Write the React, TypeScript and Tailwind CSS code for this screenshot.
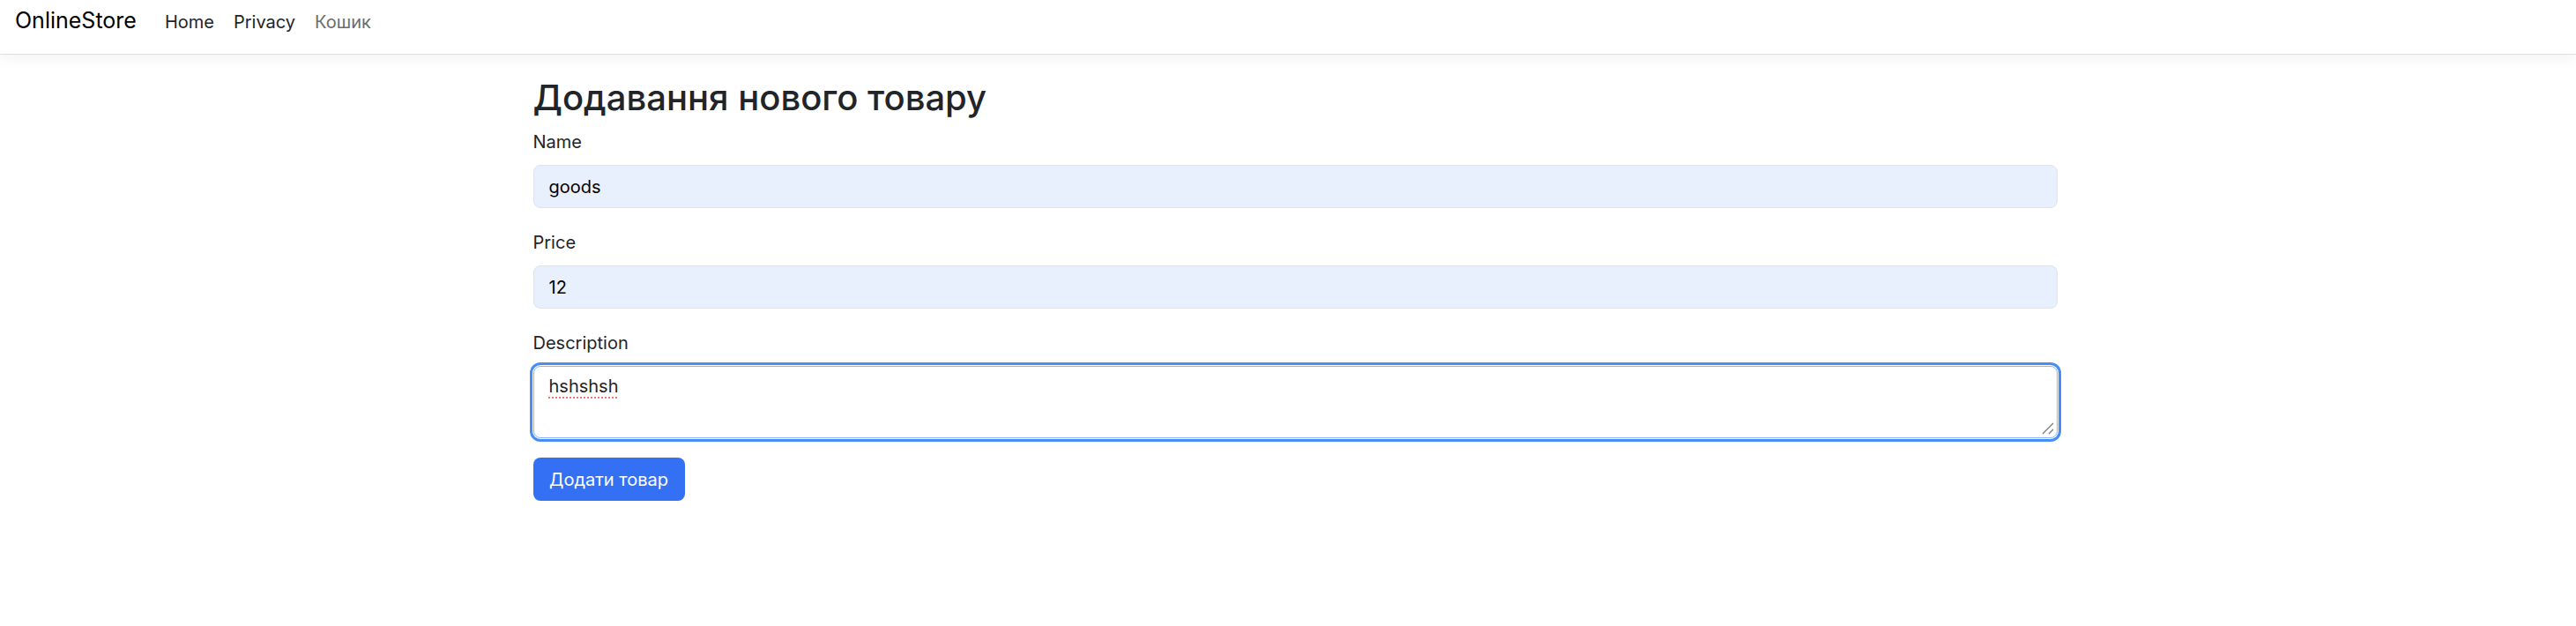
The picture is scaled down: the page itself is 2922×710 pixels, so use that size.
import React from 'react';

const labelCls = "block text-[20px] leading-[30px] font-normal text-[#212529] mb-[11px]";
const inputCls =
  "flex items-center h-[49px] px-[17px] rounded-[8px] border border-[#dfe3ea] bg-[#e8f0fe] text-[20px] leading-[30px] text-black";

const Navbar: React.FC = () => (
  <nav className="h-[62px] flex items-baseline pt-[8px] px-[17px] bg-white border-b border-[#dcdfe3] shadow-[0_5px_15px_rgba(0,0,0,0.05)]">
    <a className="text-[25px] leading-[30px] font-normal text-black mr-[21px]">OnlineStore</a>
    <ul className="flex items-baseline text-[20px] leading-[30px] font-normal">
      <li><a className="px-[11px] text-[#212529]">Home</a></li>
      <li><a className="px-[11px] text-[#212529]">Privacy</a></li>
      <li><a className="px-[11px] text-[#6c6c6c]">Кошик</a></li>
    </ul>
  </nav>
);

const ResizeGrip: React.FC = () => (
  <svg className="absolute right-[3px] bottom-[3px]" width="14" height="14" viewBox="0 0 14 14">
    <line x1="1" y1="13" x2="13" y2="1" stroke="#7a7a7a" strokeWidth="1.3" />
    <line x1="8" y1="13" x2="13" y2="8" stroke="#7a7a7a" strokeWidth="1.3" />
  </svg>
);

export default function App() {
  return (
    <div className="min-h-screen bg-white font-[Inter,'Noto_Sans',sans-serif]">
      <Navbar />
      <main className="mx-auto w-[1745px] pl-4 pt-[25px]">
        <h2 className="text-[40px] leading-[48px] font-medium text-[#212529] mb-[11px]">Додавання нового товару</h2>

        <div className="mb-[24px]">
          <label className={labelCls}>Name</label>
          <div className={inputCls}>goods</div>
        </div>

        <div className="mb-[24px]">
          <label className={labelCls}>Price</label>
          <div className={inputCls}>12</div>
        </div>

        <div className="mb-[22px]">
          <label className={labelCls}>Description</label>
          <div className="relative h-[82px] px-[17px] py-[7px] rounded-[8px] border border-[#86b7fe] bg-white text-[20px] leading-[30px] text-[#212529] shadow-[0_0_0_1px_#ffffff,0_0_0_4px_#4a8cf6]">
            <span className="underline decoration-dotted decoration-[#f0776a] decoration-2 underline-offset-[5px]">hshshsh</span>
            <ResizeGrip />
          </div>
        </div>

        <button className="h-[49px] w-[172px] rounded-[8px] bg-[#3470f4] text-white text-[20px] leading-[30px]">
          Додати товар
        </button>
      </main>
    </div>
  );
}
